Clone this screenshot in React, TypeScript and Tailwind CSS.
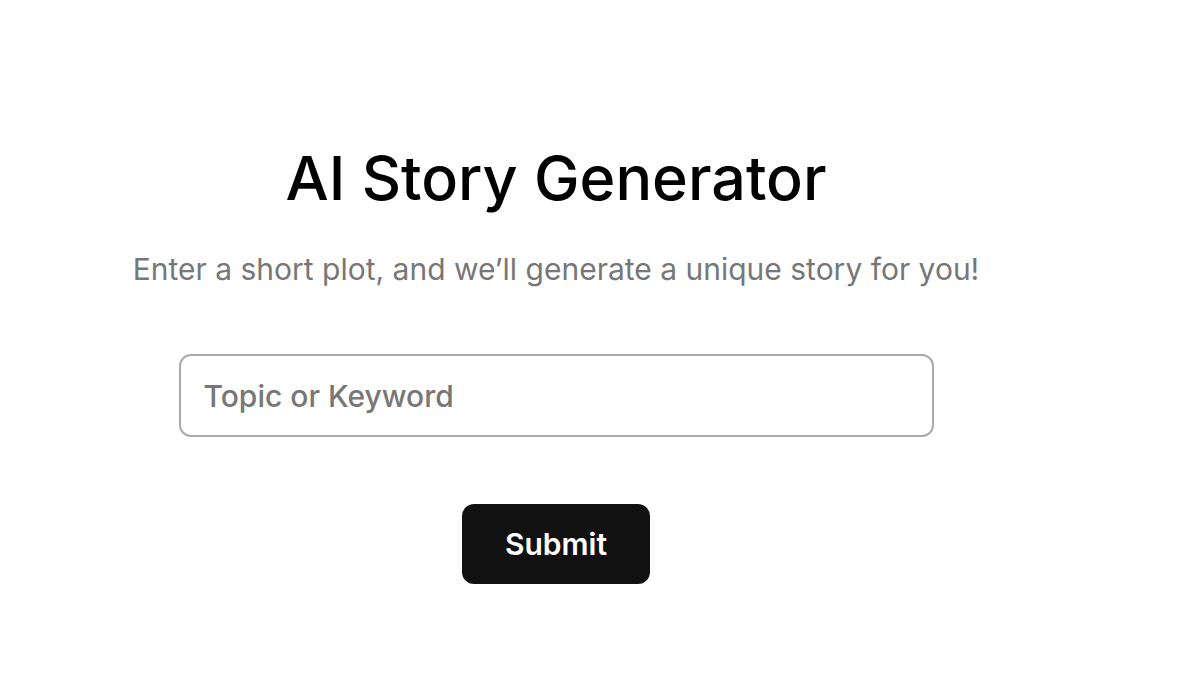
import React, { useState } from 'react';

const App: React.FC = () => {
  const [topic, setTopic] = useState('');

  return (
    <div className="min-h-screen bg-white font-['Inter',sans-serif]">
      <div className="w-[1112px] flex flex-col items-center pt-[138px]">
        <h1 className="text-[61px] leading-[80px] font-medium text-black">AI Story Generator</h1>
        <p className="mt-[33px] text-[30px] leading-[36px] text-[#777777]">
          Enter a short plot, and we’ll generate a unique story for you!
        </p>
        <input
          value={topic}
          onChange={e => setTopic(e.target.value)}
          placeholder="Topic or Keyword"
          className="mt-[67px] w-[755px] h-[83px] rounded-[12px] border-2 border-[#aaaaaa] px-[23px] text-[30px] font-medium text-black placeholder:text-[#777777] outline-none"
        />
        <button className="mt-[67px] w-[188px] h-[80px] rounded-[12px] bg-[#111111] text-white text-[30px] font-semibold">
          Submit
        </button>
      </div>
    </div>
  );
};

export default App;
